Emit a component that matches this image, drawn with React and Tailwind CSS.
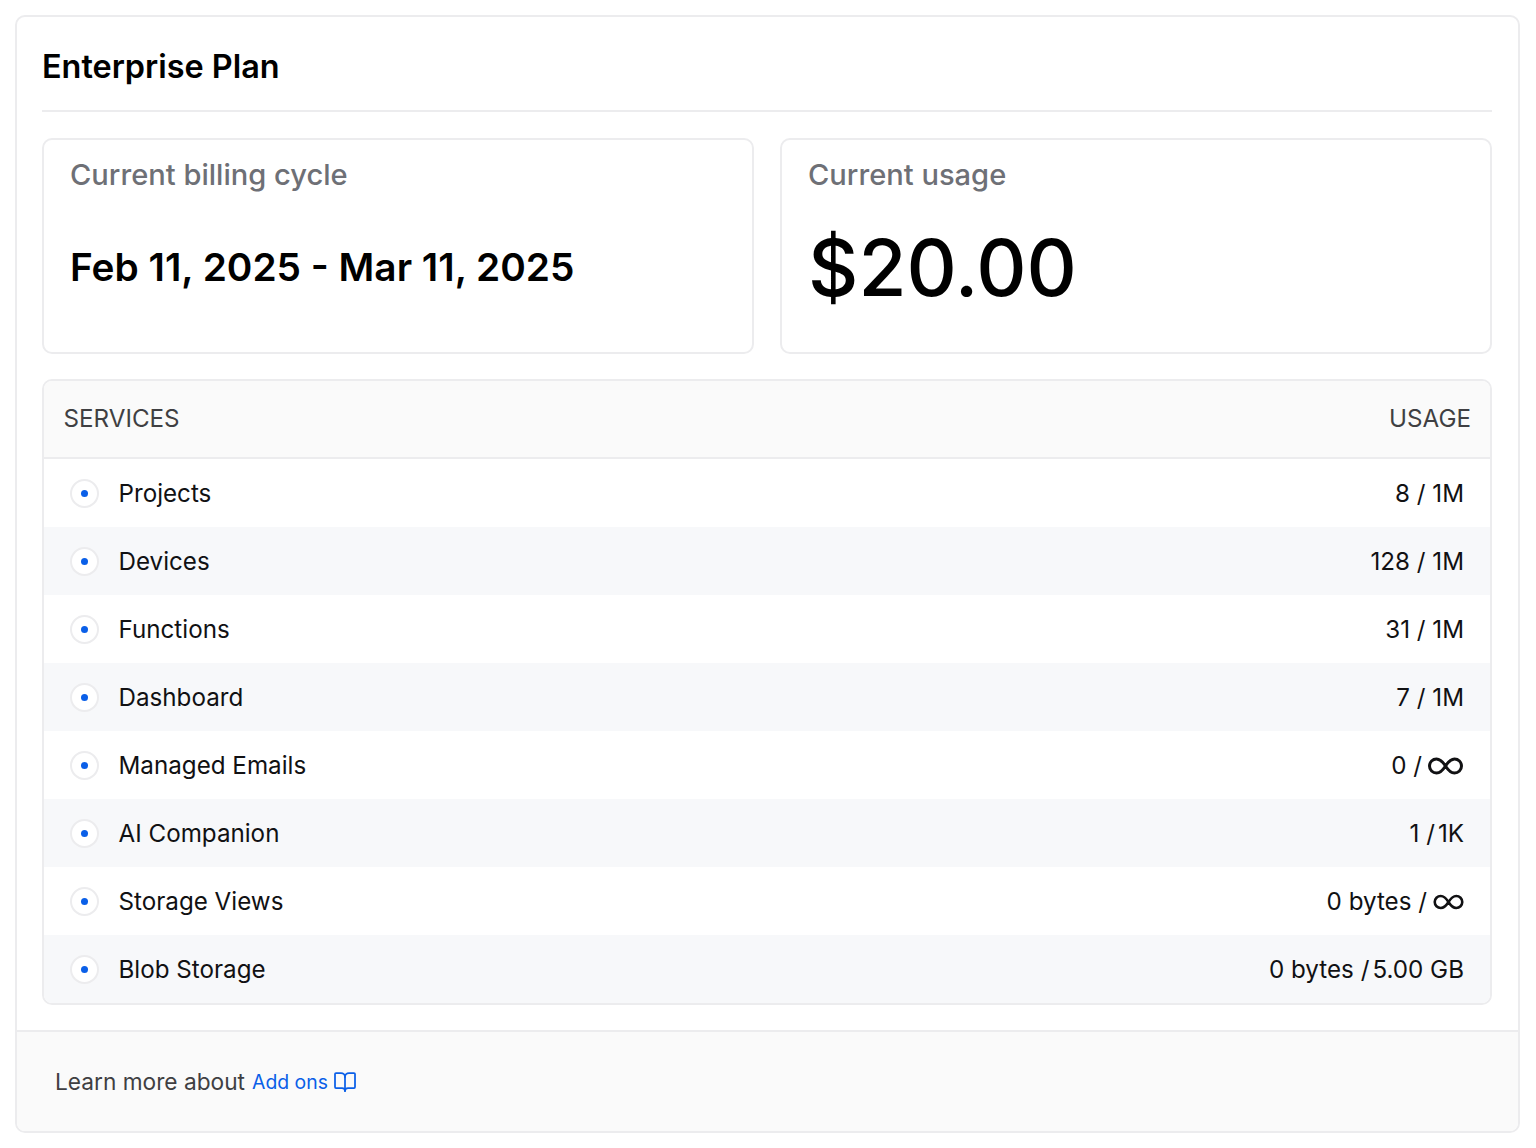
import { BookOpen } from 'lucide-react';

const services = [
    { name: 'Projects', used: '8 / 1M' },
    { name: 'Devices', used: '128 / 1M' },
    { name: 'Functions', used: '31 / 1M' },
    { name: 'Dashboard', used: '7 / 1M' },
    { name: 'Managed Emails', used: '0 /', infinite: 'big' },
    { name: 'AI Companion', used: '1 /', limit: '1K' },
    { name: 'Storage Views', used: '0 bytes /', infinite: 'small' },
    { name: 'Blob Storage', used: '0 bytes /', limit: '5.00 GB' },
];

function Infinity({ className }) {
    return (
        <svg viewBox="0 0 36 18" fill="none" stroke="currentColor" strokeWidth="3" className={className}>
            <path d="M18 9C15 4.200 12.500 2 9 2a7 7 0 0 0 0 14c3.500 0 6-2.200 9-7s5.500-7 9-7a7 7 0 0 1 0 14c-3.500 0-6-2.200-9-7z" />
        </svg>
    );
}

export default function App() {
    return (
        <div className="min-h-[1148px] bg-white pt-[15px] px-[15px] font-['Inter',sans-serif] antialiased">
            <div className="w-[1505px] h-[1118px] border-2 border-[#ececee] rounded-[10px] flex flex-col overflow-hidden">
                <div className="flex-1 pl-[25px] pr-[26px] pt-[26px]">
                    <h1 className="h-[69px] border-b-2 border-[#ececee] text-[32.4px] leading-[48px] font-semibold text-black">
                        Enterprise Plan
                    </h1>

                    <div className="grid grid-cols-2 gap-[26px] mt-[26px]">
                        <div className="h-[216px] border-2 border-[#ececee] rounded-[10px] px-[26px] pt-[16.5px]">
                            <p className="text-[29.1px] leading-[36px] font-medium text-[#6e7076]">Current billing cycle</p>
                            <p className="mt-[46.5px] text-[38.8px] leading-[56px] font-semibold text-black">
                                Feb 11, 2025 - Mar 11, 2025
                            </p>
                        </div>
                        <div className="h-[216px] border-2 border-[#ececee] rounded-[10px] px-[26px] pt-[16.5px]">
                            <p className="text-[29.1px] leading-[36px] font-medium text-[#6e7076]">Current usage</p>
                            <p className="mt-[29.5px] text-[78px] leading-[92px] font-medium text-black">$20.00</p>
                        </div>
                    </div>

                    <div className="mt-[25px] border-2 border-[#ececee] rounded-[10px] overflow-hidden">
                        <div className="h-[77.5px] flex items-center justify-between pl-[19.5px] pr-[19px] bg-[#fafafa] border-b-2 border-[#ececee] text-[24.2px] text-[#3f3f42]">
                            <span>SERVICES</span>
                            <span>USAGE</span>
                        </div>
                        {services.map((service, i) => (
                            <div
                                key={service.name}
                                className={`h-[68px] flex items-center justify-between pl-[26px] pr-[26px] pt-[3px] text-[24.2px] text-[#111113] ${i % 2 === 1 ? 'bg-[#f7f8fa]' : 'bg-white'}`}
                            >
                                <div className="flex items-center gap-[19.5px]">
                                    <span className="mb-[1px] w-[29px] h-[29px] rounded-full border-2 border-[#ececee] bg-white flex items-center justify-center">
                                        <span className="w-[7px] h-[7px] rounded-full bg-[#0a5fe8]" />
                                    </span>
                                    <span>{service.name}</span>
                                </div>
                                <div className="flex items-center">
                                    <span>{service.used}</span>
                                    {service.limit && <span className="ml-[3px]">{service.limit}</span>}
                                    {service.infinite === 'big' && <Infinity className="ml-[5px] w-[37px] h-[18px]" />}
                                    {service.infinite === 'small' && <Infinity className="ml-[6px] w-[31px] h-[16px]" />}
                                </div>
                            </div>
                        ))}
                    </div>
                </div>

                <div className="h-[101px] shrink-0 border-t-2 border-[#ececee] bg-[#fafafa] flex items-center pl-[38px] pt-[2px] text-[#3f3f42]">
                    <span className="text-[22.7px]">Learn more about</span>
                    <a className="ml-[7px] flex items-center gap-[5px] text-[19.4px] text-[#0a5fe8]">
                        Add ons
                        <BookOpen className="w-[24px] h-[24px]" strokeWidth={1.75} />
                    </a>
                </div>
            </div>
        </div>
    );
}
